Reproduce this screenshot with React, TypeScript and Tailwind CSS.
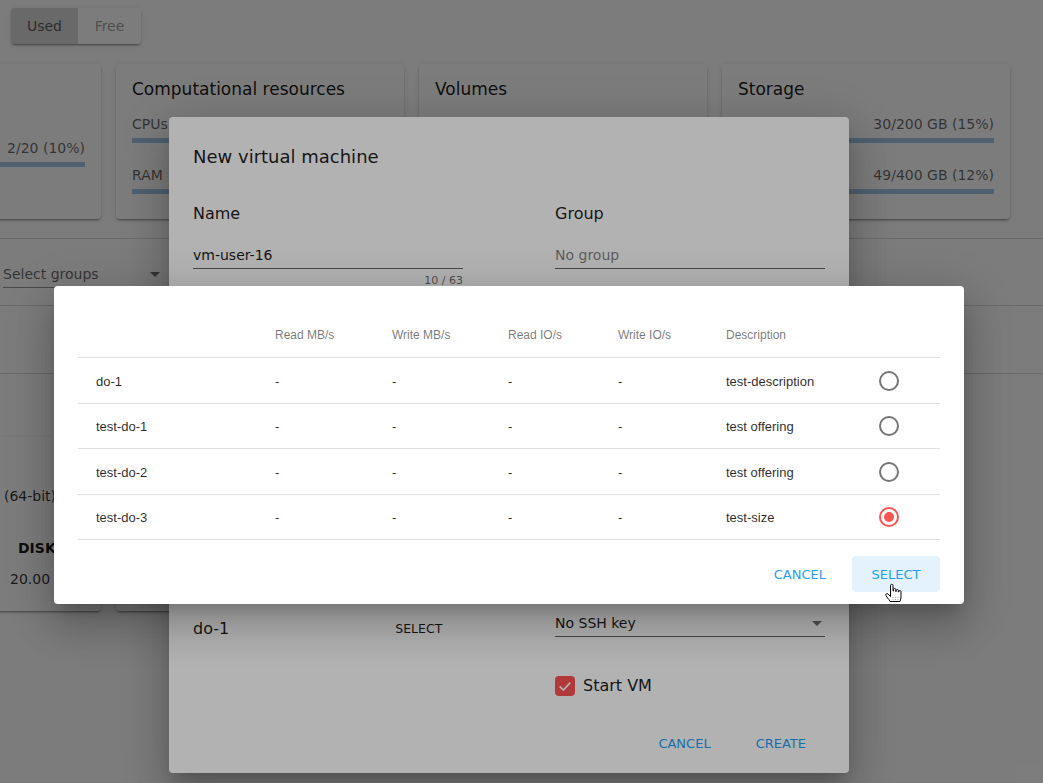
import React from "react";

const font = "font-['DejaVu_Sans',sans-serif]";

const offerings = [
  { name: "do-1", description: "test-description", y: "h-[46px]" },
  { name: "test-do-1", description: "test offering", y: "h-[45px]" },
  { name: "test-do-2", description: "test offering", y: "h-[46px]" },
  { name: "test-do-3", description: "test-size", y: "h-[45px]", selected: true },
];

const dialogShadow =
  "shadow-[0_11px_15px_-7px_rgba(0,0,0,0.2),0_24px_38px_3px_rgba(0,0,0,0.14),0_9px_46px_8px_rgba(0,0,0,0.12)]";

const cardShadow =
  "shadow-[0_3px_1px_-2px_rgba(0,0,0,0.2),0_2px_2px_0_rgba(0,0,0,0.14),0_1px_5px_0_rgba(0,0,0,0.12)]";

function Bar({ label, value }: { label: string; value: string }) {
  return (
    <div className="mb-[24px]">
      <div className="flex justify-between text-sm leading-[17px] text-black/60">
        <span>{label}</span>
        <span>{value}</span>
      </div>
      <div className="mt-[5px] h-[5px] bg-[#a3c8e8]" />
    </div>
  );
}

function ResourceCard({
  title,
  rows,
  offset,
}: {
  title?: string;
  rows: { label: string; value: string }[];
  offset?: string;
}) {
  return (
    <div className={`w-[288px] h-[155px] shrink-0 rounded-sm bg-white px-4 pt-[13px] ${cardShadow}`}>
      <div className={`h-6 text-[17px] leading-[24px] text-black/90 ${offset ?? "mb-[15px]"}`}>{title}</div>
      {rows.map((row) => (
        <Bar key={row.label + row.value} label={row.label} value={row.value} />
      ))}
    </div>
  );
}

function BackgroundPage() {
  return (
    <div className={`h-full bg-white ${font}`}>
      <div className="pl-[11px] pt-[8px]">
        <div className={`flex w-[130px] h-9 rounded-sm overflow-hidden text-sm text-black/60 ${cardShadow}`}>
          <div className="w-[67px] bg-black/15 flex items-center justify-center text-black/60">Used</div>
          <div className="flex-1 bg-white/40 flex items-center justify-center text-black/40">Free</div>
        </div>
      </div>

      <div className="mt-5 ml-[-187px] flex gap-[15px]">
        <ResourceCard offset="mb-[39px]" rows={[{ label: "", value: "2/20 (10%)" }]} />
        <ResourceCard
          title="Computational resources"
          rows={[
            { label: "CPUs", value: "" },
            { label: "RAM", value: "" },
          ]}
        />
        <ResourceCard title="Volumes" rows={[]} />
        <ResourceCard
          title="Storage"
          rows={[
            { label: "", value: "30/200 GB (15%)" },
            { label: "", value: "49/400 GB (12%)" },
          ]}
        />
      </div>

      <div className="mt-[19px] border-t border-black/15 h-[67px] pl-[3px] pt-[26px]">
        <div className="w-[160px] h-[23px] border-b border-black/40 flex items-center justify-between pr-[3px] pb-1 text-sm text-black/60">
          Select groups
          <svg width="10" height="5" viewBox="0 0 10 5" className="fill-black/55">
            <path d="M0 0h10L5 5z" />
          </svg>
        </div>
      </div>
      <div className="border-t border-black/15 h-[68px]" />
      <div className="border-t border-black/15 h-[64px]" />

      <div className="ml-[-187px] flex gap-[15px]">
        <div className={`w-[288px] h-[174px] shrink-0 rounded-sm bg-white flex flex-col pt-[49px] text-sm text-black/80 whitespace-nowrap ${cardShadow}`}>
          <div className="pl-[191px]">(64-bit)</div>
          <div className="pl-[205px] mt-[32px] font-bold text-black/90">DISK</div>
          <div className="pl-[197px] mt-[11px]">20.00 GB</div>
        </div>
        <div className={`w-[288px] h-[174px] shrink-0 rounded-sm bg-white ${cardShadow}`} />
      </div>
    </div>
  );
}

function NewMachineDialog() {
  return (
    <div
      className={`absolute left-[169px] top-[117px] w-[680px] h-[656px] rounded-sm bg-white text-black/90 px-6 pt-[28px] ${font} ${dialogShadow}`}
    >
      <div className="text-lg leading-[24px]">New virtual machine</div>
      <div className="mt-[33px] grid grid-cols-[270px_270px] gap-x-[92px]">
        <div>
          <div className="text-base leading-[24px]">Name</div>
          <div className="mt-[17px] h-[26px] border-b border-black/60 text-sm leading-[24px]">vm-user-16</div>
          <div className="text-right text-[11px] leading-[24px] text-black/60">10 / 63</div>
        </div>
        <div>
          <div className="text-base leading-[24px]">Group</div>
          <div className="mt-[17px] h-[26px] border-b border-black/60 text-sm leading-[24px] text-black/50">No group</div>
        </div>
      </div>

      <div className="absolute left-6 right-6 bottom-[136px] grid grid-cols-[270px_270px] gap-x-[92px]">
        <div className="flex items-center h-[26px] relative top-[5px]">
          <span className="text-base">do-1</span>
          <span className="ml-[166px] text-[12.5px] text-black/90">SELECT</span>
        </div>
        <div className="h-[26px] border-b border-black/60 flex items-center justify-between pr-[3px] pb-[1px] text-sm">
          No SSH key
          <svg width="10" height="5" viewBox="0 0 10 5" className="fill-black/55">
            <path d="M0 0h10L5 5z" />
          </svg>
        </div>
      </div>

      <div className="absolute left-[386px] bottom-[75px] flex items-center gap-2 text-base">
        <div className="w-5 h-5 rounded-sm bg-[#ff5252] flex items-center justify-center">
          <svg width="16" height="16" viewBox="0 0 24 24" fill="none" stroke="#fff" strokeWidth="2.6">
            <path d="M4 12.5l5.5 5.5L20 7" />
          </svg>
        </div>
        Start VM
      </div>

      <div className="absolute right-[43px] bottom-[20px] flex gap-[45px] text-[13px] leading-[18px] text-[#1ea0f5]">
        <span>CANCEL</span>
        <span>CREATE</span>
      </div>
    </div>
  );
}

function Radio({ selected }: { selected?: boolean }) {
  return (
    <div
      className={`w-5 h-5 rounded-full border-2 flex items-center justify-center ${
        selected ? "border-[#ff5252]" : "border-[#757575]"
      }`}
    >
      {selected && <div className="w-[10px] h-[10px] rounded-full bg-[#ff5252]" />}
    </div>
  );
}

function OfferingDialog() {
  return (
    <div
      className={`absolute left-[54px] top-[286px] w-[910px] h-[318px] rounded-sm bg-white px-6 pt-[26px] ${dialogShadow}`}
    >
      <div className="font-['Liberation_Sans',sans-serif] text-[13px]">
        <div className="grid grid-cols-[197px_117px_116px_110px_108px_1fr] h-[46px] items-center pt-[1px] border-b border-[#e0e0e0] text-xs text-black/55">
          <span />
          <span>Read MB/s</span>
          <span>Write MB/s</span>
          <span>Read IO/s</span>
          <span>Write IO/s</span>
          <span>Description</span>
        </div>
        {offerings.map((row) => (
          <div
            key={row.name}
            className={`grid grid-cols-[197px_117px_116px_110px_108px_151px_1fr] items-center border-b border-[#e0e0e0] text-black/85 ${row.y}`}
          >
            <span className="pl-[18px] pt-[2px]">{row.name}</span>
            <span className="pt-[2px]">-</span>
            <span className="pt-[2px]">-</span>
            <span className="pt-[2px]">-</span>
            <span className="pt-[2px]">-</span>
            <span className="pt-[2px]">{row.description}</span>
            <div className="justify-self-start ml-[2px]">
              <Radio selected={row.selected} />
            </div>
          </div>
        ))}
      </div>
      <div className={`mt-4 flex justify-end items-center text-[13px] text-[#1ea0f5] ${font}`}>
        <span className="mr-[26px] pt-[1px]">CANCEL</span>
        <span className="w-[88px] h-9 rounded-sm bg-[#e3f2fd] flex items-center justify-center pt-[1px]">SELECT</span>
      </div>
    </div>
  );
}

function HandCursor() {
  return (
    <svg width="19" height="20" viewBox="0 0 19 20" className="absolute left-[885px] top-[583px]">
      <path
        d="M5.500 2.500c0-1.600 2.500-1.600 2.500 0V8h.5V6.500c0-1.300 2.300-1.300 2.300 0V8.500h.4V7.500c0-1.200 2.200-1.200 2.200 0V9h.4V8.500c0-1.200 2.200-1.200 2.200 0V14c0 1.500-.5 2.500-1 4.500H5c-.5-1.500-1.500-2.500-2.500-3.500L1 12.500c-.8-1.500 1-2.500 2-1.500l2.500 2.500z"
        fill="#fff"
        stroke="#000"
        strokeWidth="1"
        strokeLinejoin="round"
      />
      <path d="M8 14v3M10.500 14v3M13 14v3" stroke="#888" strokeWidth="0.7" strokeDasharray="1 1" />
    </svg>
  );
}

export default function App() {
  return (
    <div className="relative h-screen overflow-hidden">
      <BackgroundPage />
      <div className="absolute inset-0 bg-black/30" />
      <NewMachineDialog />
      <div className="absolute inset-0 bg-black/30" />
      <OfferingDialog />
      <HandCursor />
    </div>
  );
}
